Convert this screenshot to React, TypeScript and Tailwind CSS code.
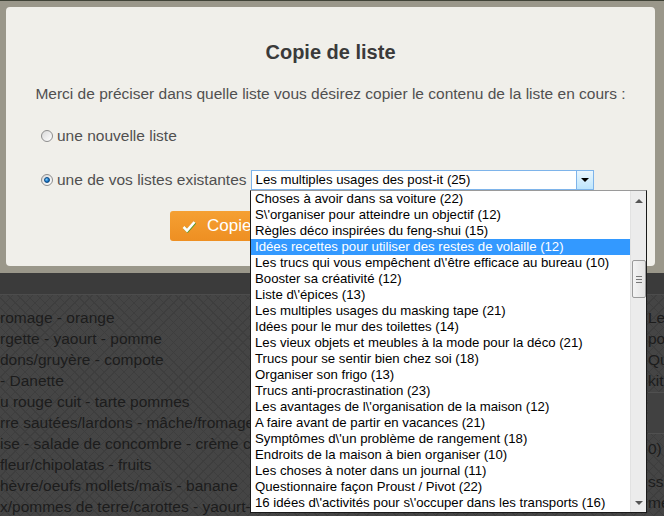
import React from 'react'

const LISTS = [
  'Choses à avoir dans sa voiture (22)',
  "S\\'organiser pour atteindre un objectif (12)",
  'Règles déco inspirées du feng-shui (15)',
  'Idées recettes pour utiliser des restes de volaille (12)',
  "Les trucs qui vous empêchent d\\'être efficace au bureau (10)",
  'Booster sa créativité (12)',
  "Liste d\\'épices (13)",
  'Les multiples usages du masking tape (21)',
  'Idées pour le mur des toilettes (14)',
  'Les vieux objets et meubles à la mode pour la déco (21)',
  'Trucs pour se sentir bien chez soi (18)',
  'Organiser son frigo (13)',
  'Trucs anti-procrastination (23)',
  "Les avantages de l\\'organisation de la maison (12)",
  'A faire avant de partir en vacances (21)',
  "Symptômes d\\'un problème de rangement (18)",
  'Endroits de la maison à bien organiser (10)',
  'Les choses à noter dans un journal (11)',
  'Questionnaire façon Proust / Pivot (22)',
  "16 idées d\\'activités pour s\\'occuper dans les transports (16)",
]

const MENU_LINES = [
  'romage - orange',
  'rgette - yaourt - pomme',
  'dons/gruyère - compote',
  '- Danette',
  'u rouge cuit - tarte pommes',
  'rre sautées/lardons - mâche/fromage',
  'ise - salade de concombre - crème c',
  'fleur/chipolatas - fruits',
  'hèvre/oeufs mollets/maïs - banane',
  'x/pommes de terre/carottes - yaourt-',
]

function Radio({ checked }: { checked?: boolean }) {
  return (
    <span className="w-[12px] h-[12px] rounded-full border border-[#8d8d8d] bg-[linear-gradient(135deg,#d9d9d9,#ffffff)] flex items-center justify-center flex-shrink-0">
      {checked && (
        <span className="w-[6px] h-[6px] rounded-full bg-[radial-gradient(circle_at_35%_35%,#7fd0ff,#1673c4_60%,#0b4f8f)] border border-[#0a4680]" />
      )}
    </span>
  )
}

export default function App() {
  return (
    <div
      className="relative w-[664px] h-[516px] overflow-hidden bg-[#454545] text-[#1c1c1c]"
      style={{ fontFamily: '"Liberation Sans", Arial, sans-serif' }}
    >
      {/* page behind the overlay */}
      <div className="bg-[image:repeating-linear-gradient(45deg,#3e3e3e_0_1px,transparent_1px_7px),repeating-linear-gradient(-45deg,#3e3e3e_0_1px,transparent_1px_7px)] h-full">
        <div className="h-[273px] bg-[#3f4236]" />
        <div className="h-[22px] bg-[#3b3b3b] border-b border-[#4c4c4c]" />
        <div className="flex justify-between pt-[12px]">
          <div className="text-[15.5px] leading-[21px] whitespace-nowrap">
            {MENU_LINES.map((l) => (
              <div key={l}>{l}</div>
            ))}
          </div>
          <div className="w-[16px] text-[15.5px] leading-[21px] whitespace-nowrap overflow-hidden">
            <div>Les</div>
            <div>pos</div>
            <div>Qu</div>
            <div>kit</div>
            <div className="h-[42px] mt-[1px] border-y border-[#505050] bg-[#414141]" />
            <div className="mt-[4px]">0)</div>
            <div className="mt-[12px]">ssi</div>
            <div>me</div>
          </div>
        </div>
      </div>

      {/* modal */}
      <div className="absolute left-0 top-[1px] w-[664px] bg-[#9a978a] pl-[6px] pr-[9px] pt-[6px] pb-[7px]">
        <div className="bg-[#f0efea] rounded-[4px] h-[259px] pt-[33px]">
          <h2 className="text-center text-[20px] leading-[24px] font-bold text-[#3a3a3a]">Copie de liste</h2>
          <p className="mt-[20px] text-center text-[15.5px] leading-[20px] text-[#505050]">
            Merci de préciser dans quelle liste vous désirez copier le contenu de la liste en cours :
          </p>
          <div className="mt-[22px] ml-[35px] flex items-center gap-[4px] h-[20px] text-[15.5px] text-[#505050]">
            <Radio />
            <span>une nouvelle liste</span>
          </div>
          <div className="mt-[24px] ml-[35px] flex items-center h-[20px] text-[15.5px] text-[#505050]">
            <Radio checked />
            <span className="ml-[4px]">une de vos listes existantes</span>
            <div className="ml-[4px] w-[343px] h-[20px] bg-white border border-[#7eb4ea] flex items-center">
              <span className="flex-1 pl-[4px] text-[13.2px] text-black whitespace-nowrap">
                Les multiples usages des post-it (25)
              </span>
              <span className="w-[17px] h-[18px] border-l border-[#7eb4ea] bg-[linear-gradient(#eaf6fd,#bee6fd)] flex items-center justify-center">
                <span className="w-0 h-0 border-x-[4px] border-x-transparent border-t-[4px] border-t-black" />
              </span>
            </div>
          </div>
          <div className="mt-[21px] ml-[164px]">
            <button className="w-[90px] h-[30px] rounded-[3px] bg-[linear-gradient(#f5a033,#ee8f22)] flex items-center pl-[12px] gap-[11px] text-white text-[17px]">
              <svg width="14" height="13" viewBox="0 0 14 13">
                <path d="M1.5 7 L5 10.5 L12.5 2" fill="none" stroke="#5a9a2a" strokeWidth="3" transform="translate(0.5 0.5)" />
                <path d="M1.5 7 L5 10.5 L12.5 2" fill="none" stroke="#ffffff" strokeWidth="2.6" />
              </svg>
              <span>Copier</span>
            </button>
          </div>
        </div>
      </div>

      {/* open dropdown list */}
      <div className="absolute left-[250px] top-[190px] w-[397px] h-[323px] bg-white border border-[#1a1a1a] border-t-[#9a9a9a] flex">
        <div className="flex-1 text-[13.2px] leading-[16px] text-black">
          {LISTS.map((l, i) => (
            <div
              key={l}
              className={`h-[16px] pl-[4px] whitespace-nowrap ${i === 3 ? 'bg-[#3399ff] text-white' : ''}`}
            >
              {l}
            </div>
          ))}
        </div>
        <div className="w-[16px] bg-[#ececec] border-l border-[#e2e2e2] flex flex-col items-center">
          <span className="mt-[8px] w-0 h-0 border-x-[4px] border-x-transparent border-b-[4px] border-b-[#555]" />
          <div className="mt-[57px] w-[14px] h-[38px] rounded-[2px] border border-[#9a9a9a] bg-[linear-gradient(90deg,#f4f4f4,#e3e3e3)] flex flex-col items-center justify-center gap-[2px]">
            <span className="w-[6px] h-px bg-[#777]" />
            <span className="w-[6px] h-px bg-[#777]" />
            <span className="w-[6px] h-px bg-[#777]" />
          </div>
          <span className="mt-auto mb-[7px] w-0 h-0 border-x-[4px] border-x-transparent border-t-[4px] border-t-[#555]" />
        </div>
      </div>
    </div>
  )
}
